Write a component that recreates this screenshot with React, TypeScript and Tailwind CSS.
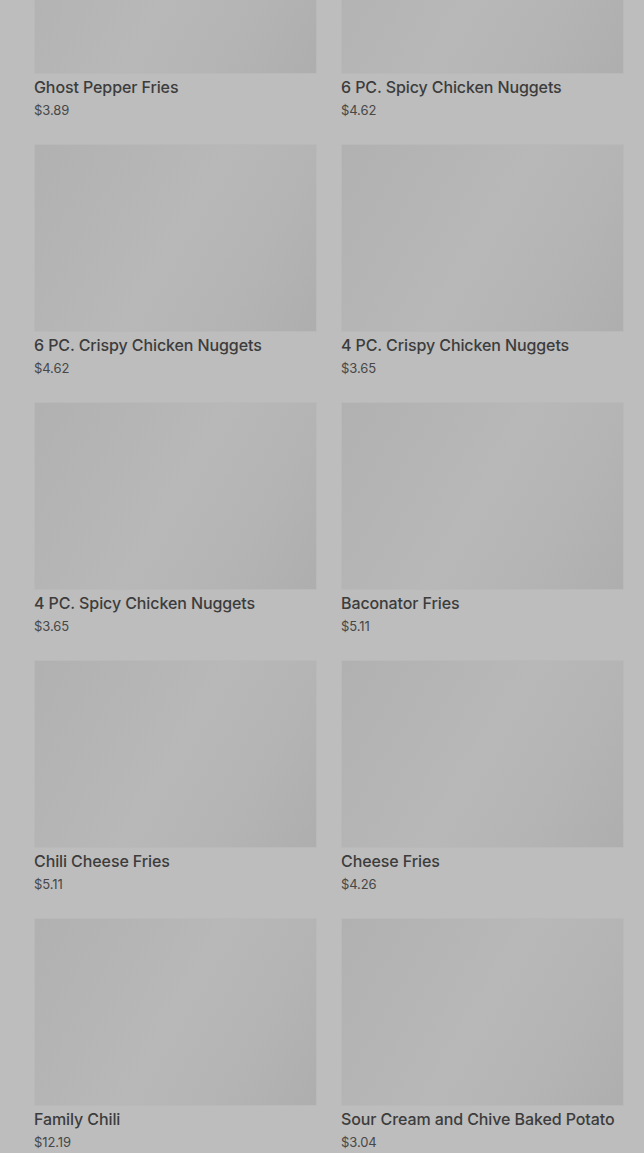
import React from "react";

interface MenuItem {
  name: string;
  price: string;
}

const items: MenuItem[] = [
  { name: "Ghost Pepper Fries", price: "$3.89" },
  { name: "6 PC. Spicy Chicken Nuggets", price: "$4.62" },
  { name: "6 PC. Crispy Chicken Nuggets", price: "$4.62" },
  { name: "4 PC. Crispy Chicken Nuggets", price: "$3.65" },
  { name: "4 PC. Spicy Chicken Nuggets", price: "$3.65" },
  { name: "Baconator Fries", price: "$5.11" },
  { name: "Chili Cheese Fries", price: "$5.11" },
  { name: "Cheese Fries", price: "$4.26" },
  { name: "Family Chili", price: "$12.19" },
  { name: "Sour Cream and Chive Baked Potato", price: "$3.04" },
];

const ItemCard = ({ item }: { item: MenuItem }) => {
  return (
    <div className="flex flex-col">
      <div className="h-[188px] w-full border border-[#b9b9b9] bg-[linear-gradient(120deg,#b1b1b1_0%,#b5b5b5_30%,#b8b8b8_50%,#b4b4b4_75%,#aeaeae_100%)]"></div>
      <p className="mt-[1px] text-[16px] leading-6 font-medium tracking-[-0.1px] text-[#3c3c3c] whitespace-nowrap">
        {item.name}
      </p>
      <p className="mt-[1px] text-[13px] leading-5 tracking-[-0.1px] text-[#474747]">
        {item.price}
      </p>
    </div>
  );
};

export default function App() {
  return (
    <div
      className="h-[1153px] overflow-hidden bg-[#bdbdbd]"
      style={{ fontFamily: "Inter, 'Noto Sans', sans-serif" }}
    >
      <div className="mt-[-114px] grid grid-cols-2 gap-x-6 gap-y-6 pl-[34px] pr-5">
        {items.map((item) => (
          <ItemCard key={item.name} item={item} />
        ))}
      </div>
    </div>
  );
}
